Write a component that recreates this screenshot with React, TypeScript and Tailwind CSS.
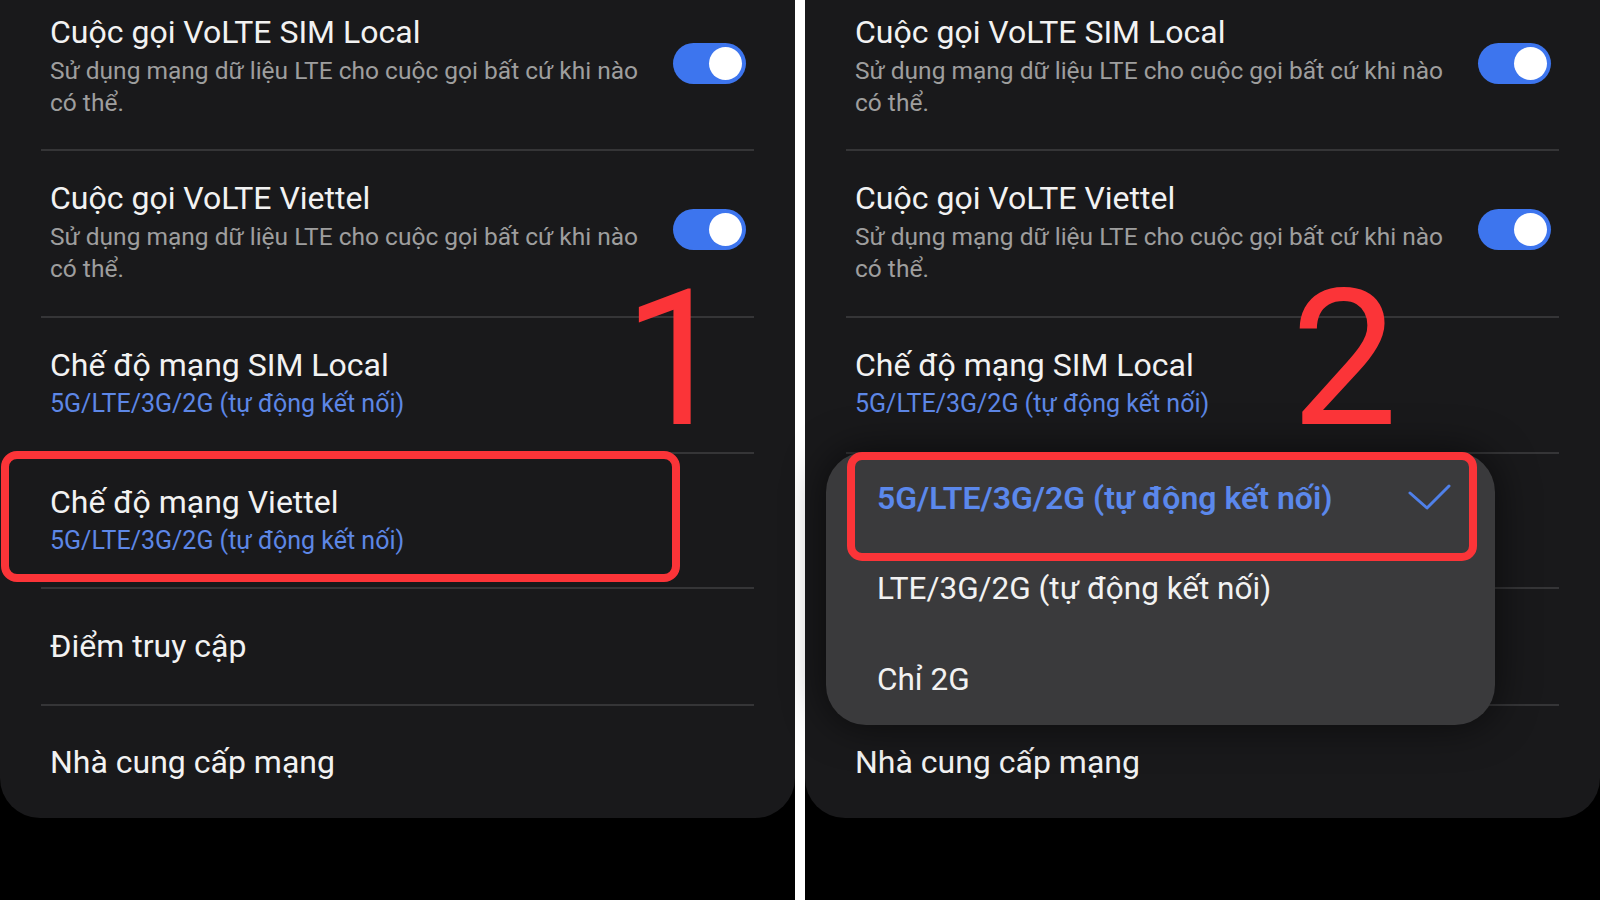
import React from "react";

type Item = {
  title: string;
  sub?: string;
  blue?: boolean;
  toggle?: boolean;
  pad: string;
};

const SUB = "Sử dụng mạng dữ liệu LTE cho cuộc gọi bất cứ khi nào có thể.";
const AUTO = "5G/LTE/3G/2G (tự động kết nối)";

const ITEMS: Item[] = [
  { title: "Cuộc gọi VoLTE SIM Local", sub: SUB, toggle: true, pad: "pt-[14px] pb-[30px]" },
  { title: "Cuộc gọi VoLTE Viettel", sub: SUB, toggle: true, pad: "pt-[29px] pb-[31px]" },
  { title: "Chế độ mạng SIM Local", sub: AUTO, blue: true, pad: "pt-[29px] pb-[32px]" },
  { title: "Chế độ mạng Viettel", sub: AUTO, blue: true, pad: "pt-[30px] pb-[30px]" },
  { title: "Điểm truy cập", pad: "pt-[39px] pb-[40px]" },
  { title: "Nhà cung cấp mạng", pad: "pt-[38px] pb-[38px]" },
];

function Toggle() {
  return (
    <div className="w-[73px] h-[41px] mb-[7px] shrink-0 rounded-full bg-[#3d75ee] flex items-center justify-end pr-[4px]">
      <div className="w-[33px] h-[33px] rounded-full bg-white" />
    </div>
  );
}

function SettingsList() {
  return (
    <div className="flex flex-col">
      {ITEMS.map((it, i) => (
        <div key={it.title}>
          <div className={`flex items-center pl-[50px] pr-[49px] ${it.pad}`}>
            <div className="flex-1 pr-[20px]">
              <div className="text-[32px] leading-[36px] text-[#f2f2f2]">{it.title}</div>
              {it.sub && (
                <div
                  className={`mt-[5px] leading-[32px] ${it.blue ? "text-[25px] text-[#5d87e6]" : "text-[24.5px] text-[#9e9e9e]"}`}
                >
                  {it.sub}
                </div>
              )}
            </div>
            {it.toggle && <Toggle />}
          </div>
          {i < ITEMS.length - 1 && <div className="ml-[41px] mr-[41px] h-[2px] bg-[#353537]" />}
        </div>
      ))}
    </div>
  );
}

function NetworkMenu() {
  return (
    <div className="absolute left-[21px] top-[452px] w-[669px] h-[273px] rounded-[40px] bg-[#3a3a3c] shadow-[0_0_40px_rgba(0,0,0,0.6)] flex flex-col">
      <div className="h-[91px] flex items-center justify-between pl-[51px] pr-[44px]">
        <span className="text-[32px] leading-[36px] font-semibold text-[#5b88ec]">{AUTO}</span>
        <svg width="44" height="28" viewBox="0 0 44 28" fill="none">
          <path d="M3 9 L20 24 L42 2" stroke="#4f80ea" strokeWidth="3" strokeLinecap="round" strokeLinejoin="round" />
        </svg>
      </div>
      <div className="h-[91px] flex items-center pl-[51px] text-[31.5px] leading-[36px] text-[#f2f2f2]">
        LTE/3G/2G (tự động kết nối)
      </div>
      <div className="h-[91px] flex items-center pl-[51px] text-[31.5px] leading-[36px] text-[#f2f2f2]">Chỉ 2G</div>
    </div>
  );
}

export default function App() {
  return (
    <div className="w-[1600px] h-[900px] bg-black flex items-start overflow-hidden font-['Roboto','Noto_Sans',sans-serif]">
      {/* step 1 */}
      <div className="relative w-[795px] h-[818px] shrink-0 rounded-b-[40px] bg-[#19191b]">
        <SettingsList />
        <div className="absolute left-[1px] top-[451px] w-[679px] h-[131px] rounded-[16px] border-[8px] border-[#fb3438]" />
        <div className="absolute left-[623px] top-[264px] text-[190px] leading-none text-[#fb3438]">1</div>
      </div>

      <div className="w-[10px] h-[900px] shrink-0 bg-white" />

      {/* step 2 */}
      <div className="relative w-[795px] h-[818px] shrink-0 rounded-b-[40px] bg-[#19191b]">
        <SettingsList />
        <NetworkMenu />
        <div className="absolute left-[42px] top-[452px] w-[630px] h-[109px] rounded-[15px] border-[8px] border-[#fb3438]" />
        <div className="absolute left-[486px] top-[264px] text-[190px] leading-none text-[#fb3438]">2</div>
      </div>
    </div>
  );
}
